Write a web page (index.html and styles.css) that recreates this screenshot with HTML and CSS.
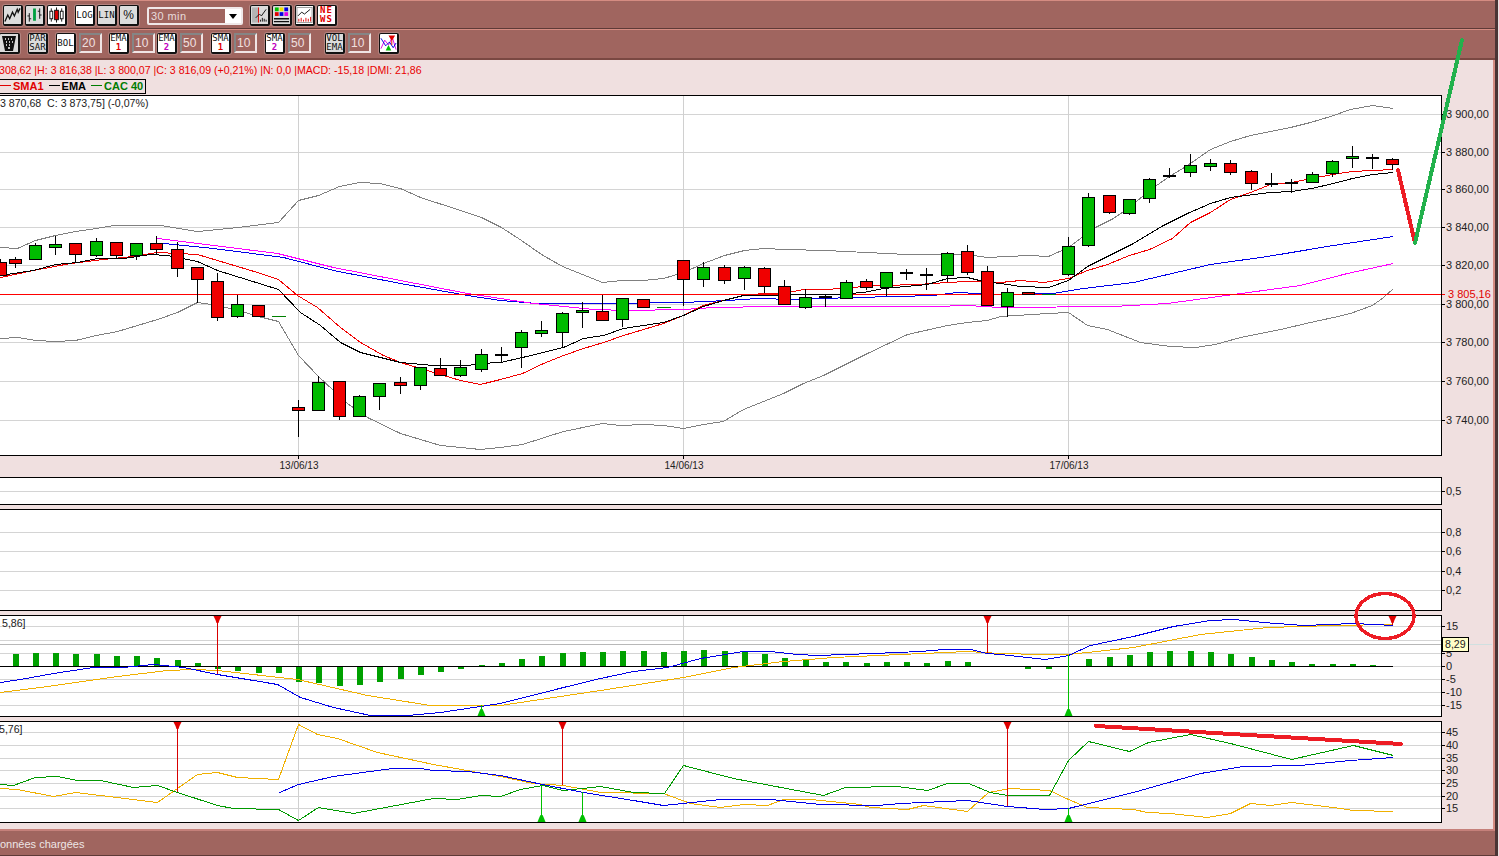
FILE: index.html
```html
<!DOCTYPE html>
<html lang="fr">
  <head>
    <meta charset="UTF-8" />
    <meta name="viewport" content="width=device-width, initial-scale=1.0" />
    <title>Graphique CAC 40</title>
    <link rel="stylesheet" href="styles.css">
  </head>
  <body>
    <div class="window">
      <div class="toolbar toolbar-top">
        <button class="tool">
          <svg viewBox="0 0 18 18"><path class="ic-line" d="M1 16 L4 9 L6 13 L9 6 L11 10 L14 3 L15 6 L17 2"/></svg>
        </button>
        <button class="tool m2">
          <svg viewBox="0 0 18 18"><path class="ic-k" d="M3.5 7V16M1.5 10H3.5M3.5 13H5.5M14.5 2V13M12.5 5H14.5M14.5 9H16.5"/><path class="ic-g" d="M9 2V15"/></svg>
        </button>
        <button class="tool m2 on">
          <svg viewBox="0 0 18 18"><path class="ic-k" d="M3.5 2V16M14.5 2V16"/><rect class="ic-w" x="2" y="5" width="3" height="8"/><rect class="ic-w" x="13" y="5" width="3" height="8"/><path class="ic-k" d="M9 1V17"/><rect class="ic-r" x="7" y="4" width="4" height="10"/></svg>
        </button>
        <button class="tool m8 on txt">LOG</button>
        <button class="tool m2 txt">LIN</button>
        <button class="tool m2 txt big">%</button>
        <div class="select m8"><span class="select-text">30 min</span><span class="select-arrow"></span></div>
        <button class="tool m7">
          <svg viewBox="0 0 18 18"><rect class="ic-gray" x="1" y="1" width="7" height="16"/><path class="ic-red" d="M8 1V17"/><path class="ic-k" d="M5 12L9 8L11 10L16 3M10 16V14M12 16V12M14 16V13M16 16V14"/></svg>
        </button>
        <button class="tool m2">
          <svg viewBox="0 0 18 18"><rect x="2" y="1" width="4" height="4" fill="#00c000"/><rect x="7" y="1" width="4" height="4" fill="#f0e000"/><rect x="12" y="1" width="4" height="4" fill="#0000e0"/><rect x="2" y="6" width="4" height="4" fill="#e00000"/><rect x="7" y="6" width="4" height="4" fill="#0000e0"/><rect x="12" y="6" width="4" height="4" fill="#e000e0"/><path class="ic-k2" d="M1 13H17M1 16H17"/></svg>
        </button>
        <button class="tool m3 on">
          <svg viewBox="0 0 18 18"><rect class="ic-frame" x="1" y="1" width="16" height="16"/><path class="ic-k" d="M2 10L6 6L9 8L15 3"/><path class="ic-red" d="M3 16V13M5.5 16V12M8 16V14M10.5 16V12M13 16V13M15.5 16V11"/></svg>
        </button>
        <button class="tool m2 on news">NE<br>WS</button>
      </div>

      <div class="toolbar toolbar-bottom">
        <button class="tool trash">
          <svg viewBox="0 0 18 18"><path d="M2 2H16L13 17H5Z" fill="#111"/><path class="ic-dots" d="M5 5H6M8 5H9M11 5H12M6 8H7M9 8H10M12 8H13M6 11H7M9 11H10M8 14H10"/></svg>
        </button>
        <button class="tool m8 txt two">PAR<br>SAR</button>
        <button class="tool m8 on txt">BOL</button>
        <div class="field m3">20</div>
        <button class="tool m7 on txt two">EMA<br><b class="one">1</b></button>
        <div class="field m3">10</div>
        <button class="tool m2 on txt two">EMA<br><b class="two-c">2</b></button>
        <div class="field m3">50</div>
        <button class="tool m8 on txt two">SMA<br><b class="one">1</b></button>
        <div class="field m3">10</div>
        <button class="tool m8 on txt two">SMA<br><b class="two-c">2</b></button>
        <div class="field m3">50</div>
        <button class="tool m14 txt two">VOL<br>EMA</button>
        <div class="field m3">10</div>
        <button class="tool m8 on">
          <svg viewBox="0 0 18 18"><path d="M1 15L5 6L9 11L13 3L17 16" fill="none" stroke="#e000e0"/><path d="M1 4L6 12L10 8L14 14L17 9" fill="none" stroke="#0000e0"/><path d="M9 1H16L13 6V11H12V6Z" fill="#e00000"/><path d="M6 17L9 11L12 17Z" fill="#00c000"/></svg>
        </button>
      </div>

      <main class="content">
        <div class="info">308,62 |H: 3 816,38 |L: 3 800,07 |C: 3 816,09 (+0,21%) |N: 0,0 |MACD: -15,18 |DMI: 21,86</div>
        <div class="legend">
          <span class="leg-red"><i></i>SMA1</span>
          <span class="leg-black"><i></i>EMA</span>
          <span class="leg-green"><i></i>CAC 40</span>
        </div>
        <div class="panels">
          <svg id="priceChart" class="chart chart-price" viewBox="0 95 1493 378"></svg>
          <svg id="emptyChart" class="chart chart-thin" viewBox="0 477 1493 28"></svg>
          <svg id="volChart" class="chart chart-mid" viewBox="0 509 1493 102"></svg>
          <svg id="macdChart" class="chart chart-mid" viewBox="0 615 1493 102"></svg>
          <svg id="dmiChart" class="chart chart-mid" viewBox="0 721 1493 102"></svg>
        </div>
      </main>

      <footer class="status">onnées chargées</footer>
    </div>

    <svg class="drawing" viewBox="0 0 1499 856">
      <path class="pen-red" d="M1398 170L1415 243"/>
      <path class="pen-green" d="M1415 243L1462 40"/>
      <ellipse class="pen-ring" cx="1385" cy="616" rx="29" ry="22.5"/>
      <path class="pen-red" d="M1096 726L1401 744"/>
    </svg>

    <script src="chart.js"></script>
  </body>
</html>
```

FILE: styles.css
```css
html,
body {
  margin: 0;
  padding: 0;
  background-color: #e8e0e0;
  overflow: hidden;
}

.window {
  display: flex;
  flex-direction: column;
  box-sizing: border-box;
  width: 1498px;
  height: 856px;
  background-color: #a0655f;
  border-right: 3px solid #4a3434;
  font-family: "Liberation Sans", Arial, sans-serif;
}

.toolbar {
  display: flex;
  align-items: flex-start;
  box-sizing: border-box;
}

.toolbar-top {
  height: 29px;
  padding: 4px 0 0 3px;
  border-top: 1px solid #d58c82;
  border-bottom: 1px solid #5e3a37;
}

.toolbar-bottom {
  height: 31px;
  padding: 3px 0 0 0;
  border-top: 1px solid #d58c82;
  border-bottom: 2px solid #7a4842;
}

.tool {
  flex: none;
  box-sizing: border-box;
  width: 20px;
  height: 21px;
  margin: 0;
  padding: 0;
  background-color: #dcdcdc;
  border: 1px solid #111;
  border-right-width: 2px;
  border-bottom-width: 2px;
  border-radius: 2px;
  box-shadow: 0 0 0 1px rgba(255, 255, 255, 0.2);
  cursor: pointer;
  overflow: hidden;
}

.tool.on {
  background-color: #fff;
}

.tool svg {
  display: block;
  width: 100%;
  height: 100%;
}

.tool.trash {
  width: 21px;
  margin-left: -1px;
}

.txt {
  font-family: "DejaVu Sans Mono", monospace;
  font-size: 9px;
  line-height: 9px;
  color: #111;
}

.txt.big {
  font-family: "Liberation Sans", sans-serif;
  font-size: 12px;
}

.txt b {
  font-weight: bold;
}

.txt .one {
  color: #e00000;
}

.txt .two-c {
  color: #c000c0;
}

.news {
  font-family: "DejaVu Sans Mono", monospace;
  font-size: 9px;
  font-weight: bold;
  line-height: 9px;
  letter-spacing: 1px;
  color: #e00000;
}

.m2 { margin-left: 2px; }
.m3 { margin-left: 3px; }
.m7 { margin-left: 7px; }
.m8 { margin-left: 8px; }
.m14 { margin-left: 14px; }

.select {
  display: flex;
  box-sizing: border-box;
  width: 96px;
  height: 18px;
  margin-top: 2px;
  border: 2px solid #f0e8e8;
  border-radius: 2px;
}

.select-text {
  flex: 1;
  padding-left: 2px;
  font-size: 11px;
  line-height: 14px;
  letter-spacing: 0.4px;
  color: #e8dcdc;
}

.select-arrow {
  position: relative;
  width: 16px;
  background-color: #fff;
}

.select-arrow::after {
  content: "";
  position: absolute;
  left: 4px;
  top: 5px;
  border-left: 4px solid transparent;
  border-right: 4px solid transparent;
  border-top: 5px solid #000;
}

.field {
  flex: none;
  box-sizing: border-box;
  width: 23px;
  height: 20px;
  padding-left: 1px;
  background-color: #a0655f;
  border: 2px solid;
  border-color: #858585 #f0e4e4 #f0e4e4 #858585;
  font-size: 12px;
  line-height: 16px;
  color: #f0e0e0;
}

.content {
  flex: 1;
  box-sizing: border-box;
  min-height: 0;
  background-color: #f0e0e0;
  border-right: 2px solid #d58c82;
  border-bottom: 2px solid #c5807a;
}

.info {
  height: 18px;
  padding-top: 3px;
  box-sizing: border-box;
  margin-left: -1px;
  font-size: 10.6px;
  line-height: 14px;
  white-space: nowrap;
  color: #e80000;
}

.legend {
  display: flex;
  gap: 5px;
  box-sizing: border-box;
  width: 147px;
  height: 15px;
  margin: 1px 0 0 -1px;
  border: 1px solid #000;
  font-size: 11px;
  font-weight: bold;
  line-height: 13px;
  white-space: nowrap;
}

.legend i {
  display: inline-block;
  width: 11px;
  height: 1px;
  margin-right: 2px;
  vertical-align: 4px;
  background-color: currentColor;
}

.leg-red { color: #e00000; }
.leg-black { color: #000; }
.leg-green { color: #007c00; }

.panels {
  display: flex;
  flex-direction: column;
  gap: 4px;
  margin-top: 1px;
}

.chart {
  display: block;
  width: 1493px;
  background: transparent;
}

.chart-price { height: 378px; }
.chart-thin { height: 28px; }
.chart-mid { height: 102px; }

.status {
  flex: none;
  box-sizing: border-box;
  height: 25px;
  padding-top: 7px;
  border-bottom: 1px solid #5e3a37;
  font-size: 11px;
  line-height: 13px;
  color: #eee6e6;
}

.drawing {
  position: absolute;
  left: 0;
  top: 0;
  width: 1499px;
  height: 856px;
  pointer-events: none;
}

.pen-red,
.pen-green,
.pen-ring {
  fill: none;
  stroke-width: 4;
  stroke-linecap: round;
  shape-rendering: crispEdges;
}

.pen-red { stroke: #ed1c24; }
.pen-green { stroke: #22b14c; }
.pen-ring { stroke: #ed1c24; stroke-width: 3.5; }

/* icon strokes */
.ic-k { fill: none; stroke: #111; stroke-width: 1; }
.ic-line { fill: none; stroke: #111; stroke-width: 1.4; }
.ic-k2 { fill: none; stroke: #111; stroke-width: 1.5; }
.ic-g { fill: none; stroke: #00a040; stroke-width: 3; }
.ic-w { fill: #fff; stroke: #111; stroke-width: 1; }
.ic-r { fill: #e00000; stroke: #111; stroke-width: 1; }
.ic-red { fill: none; stroke: #e00000; stroke-width: 1; }
.ic-gray { fill: #b4b4b4; }
.ic-frame { fill: none; stroke: #999; stroke-width: 1; }
.ic-dots { fill: none; stroke: #fff; stroke-width: 1.5; }

/* chart pieces */
.box { fill: #fff; }
.frame { fill: none; stroke: #000; shape-rendering: crispEdges; }
.grid { stroke: #d4d4d4; shape-rendering: crispEdges; }
.vgrid { stroke: #d0d0d0; shape-rendering: crispEdges; }
.tick { stroke: #000; shape-rendering: crispEdges; }
.ln { fill: none; stroke-width: 1; shape-rendering: crispEdges; }
.wick { stroke: #000; shape-rendering: crispEdges; }
.flat { fill: #008000; shape-rendering: crispEdges; }
.body { stroke: #000; shape-rendering: crispEdges; }
.up { fill: #00bb00; }
.down { fill: #f00000; }
.bar { fill: #00a000; shape-rendering: crispEdges; }
.zero { stroke: #000; shape-rendering: crispEdges; }
.level { fill: #ff0000; shape-rendering: crispEdges; }
.cross { stroke: #b8b8b8; shape-rendering: crispEdges; }
.cross-out { stroke: #d0e0e0; shape-rendering: crispEdges; }
.tip { fill: #ffffc8; stroke: #000; shape-rendering: crispEdges; }
.sig-red { stroke: #d80000; shape-rendering: crispEdges; }
.sig-green { stroke: #00c000; shape-rendering: crispEdges; }
.tri-red { fill: #e00000; }
.tri-green { fill: #00c000; }

.label,
.note {
  font-family: "Liberation Sans", Arial, sans-serif;
  font-size: 11px;
  fill: #222;
}

.note {
  font-size: 10.6px;
}

.label-red {
  fill: #e00000;
}

.date {
  text-anchor: middle;
  font-size: 10px;
}
```

FILE: chart.js
```js
const GRAY = "#808080";
const RED = "#f00000";
const BLACK = "#000000";
const BLUE = "#0000e8";
const MAGENTA = "#ff00ff";
const GREEN = "#009a00";
const ORANGE = "#f0b000";

// x, wick top, wick bottom, body top, body bottom, kind
const candles = [
  [0, 259, 275, 262, 275, "d"], [15, 257, 268, 259, 263, "d"], [35, 243, 259, 245, 259, "u"],
  [55, 236, 255, 244, 247, "u"], [75, 243, 263, 243, 254, "d"], [96, 238, 257, 241, 255, "u"],
  [116, 242, 258, 242, 255, "d"], [136, 243, 260, 243, 255, "u"], [156, 236, 255, 243, 249, "d"],
  [177, 242, 277, 249, 268, "d"], [197, 267, 303, 267, 279, "d"], [217, 273, 321, 281, 317, "d"],
  [237, 295, 318, 304, 316, "u"], [258, 305, 316, 305, 316, "d"], [278, 316, 316, 0, 0, "f"],
  [298, 400, 437, 407, 410, "d"], [318, 376, 411, 382, 410, "u"], [339, 381, 420, 381, 416, "d"],
  [359, 395, 416, 396, 416, "u"], [379, 383, 410, 383, 396, "u"], [400, 377, 394, 382, 385, "d"],
  [420, 367, 390, 367, 385, "u"], [440, 358, 376, 368, 375, "d"], [460, 360, 377, 367, 375, "u"],
  [481, 349, 372, 354, 369, "u"], [501, 347, 363, 355, 0, "x"], [521, 330, 368, 332, 347, "u"],
  [541, 321, 337, 330, 333, "u"], [562, 312, 347, 313, 332, "u"], [582, 302, 328, 310, 312, "u"],
  [602, 295, 320, 311, 320, "d"], [622, 298, 327, 298, 319, "u"], [643, 299, 307, 299, 307, "d"],
  [663, 307, 307, 0, 0, "f"], [683, 260, 306, 260, 279, "d"], [703, 262, 287, 267, 279, "u"],
  [724, 265, 284, 267, 280, "d"], [744, 266, 290, 267, 278, "u"], [764, 267, 293, 268, 286, "d"],
  [784, 280, 304, 286, 304, "d"], [805, 289, 309, 297, 307, "u"], [825, 294, 307, 297, 0, "x"],
  [846, 280, 298, 282, 298, "u"], [866, 279, 290, 281, 287, "d"], [886, 272, 296, 272, 287, "u"],
  [906, 269, 280, 273, 0, "x"], [926, 268, 290, 275, 0, "x"], [947, 252, 282, 253, 275, "u"],
  [967, 245, 275, 251, 272, "d"], [987, 266, 305, 271, 305, "d"], [1007, 288, 317, 292, 306, "u"],
  [1028, 292, 294, 292, 294, "d"], [1048, 294, 294, 0, 0, "f"], [1068, 237, 276, 246, 274, "u"],
  [1088, 193, 247, 197, 245, "u"], [1109, 195, 214, 195, 212, "d"], [1129, 199, 215, 199, 213, "u"],
  [1149, 178, 203, 179, 198, "u"], [1169, 168, 178, 176, 0, "x"], [1190, 154, 177, 165, 172, "u"],
  [1210, 159, 171, 163, 166, "u"], [1230, 160, 175, 163, 172, "d"], [1251, 170, 190, 171, 183, "d"],
  [1271, 173, 187, 184, 0, "x"], [1291, 179, 193, 183, 0, "x"], [1312, 172, 182, 174, 182, "u"],
  [1332, 160, 177, 161, 173, "u"], [1352, 146, 168, 156, 158, "u"], [1372, 154, 169, 158, 0, "x"],
  [1392, 158, 170, 159, 164, "d"],
];

const bandUp = [0,247,17,248,35,240,55,235,75,231,96,228,113,225,160,225,197,231,238,227,278,222,298,200,318,195,339,186,359,182,379,183,400,188,420,197,460,210,481,217,501,227,521,240,541,254,562,266,582,274,602,282,622,280,643,280,663,278,683,272,703,263,724,255,744,250,764,248,785,249,825,250,866,252,906,254,966,254,987,257,1007,256,1028,255,1048,256,1068,247,1095,227,1113,218,1129,207,1149,190,1169,176,1187,165,1210,149,1230,141,1250,135,1270,131,1290,127,1310,122,1330,116,1350,109,1372,105,1393,108];
const bandLow = [0,338,17,337,35,340,55,341,75,340,96,335,117,331,137,325,157,319,177,312,197,302,217,305,238,310,258,316,278,321,298,355,318,376,333,390,347,403,367,417,400,433,440,445,480,449,500,447,522,444,563,431,602,423,620,425,643,424,663,425,683,428,703,424,723,421,743,409,763,401,783,393,803,383,823,375,867,353,907,334,947,325,967,322,987,320,1000,316,1048,313,1068,312,1087,325,1107,329,1140,342,1170,346,1195,347,1215,344,1240,337,1280,329,1310,322,1333,317,1350,313,1372,305,1383,297,1393,288];
const sma1 = [0,277,33,270,70,263,103,259,133,256,157,252,177,253,197,254,217,260,257,272,278,279,297,295,317,307,340,327,360,342,383,355,400,362,420,368,440,374,460,380,480,384,500,379,522,373,543,363,563,355,583,348,603,342,623,335,663,323,683,315,703,305,723,300,743,295,763,293,783,293,803,289,823,289,843,288,863,286,883,285,917,284,947,282,967,281,1000,282,1020,280,1043,282,1068,278,1087,270,1107,264,1129,255,1149,249,1172,238,1190,222,1210,212,1230,199,1250,192,1270,184,1291,182,1311,178,1332,174,1352,171,1372,170,1393,169];
const ema = [0,275,13,273,33,270,55,264,77,262,97,258,123,258,150,254,167,255,197,261,217,270,278,289,300,312,320,325,340,342,360,352,400,362,433,365,467,365,480,363,500,362,522,357,563,347,583,338,603,335,623,328,663,322,683,315,703,306,723,300,743,295,833,294,863,292,883,288,927,284,947,278,967,277,983,281,1000,283,1020,286,1048,287,1068,280,1087,266,1133,243,1163,225,1187,213,1210,203,1230,197,1270,192,1291,191,1311,188,1333,183,1352,178,1372,174,1393,172];
const emaBlue = [163,243,213,248,283,257,333,270,400,283,467,295,500,300,537,303,600,303,683,302,727,300,757,298,793,299,853,297,897,296,933,295,957,292,1000,294,1053,293,1083,288,1133,282,1210,264,1267,256,1333,245,1393,236];
const smaPink = [157,238,213,245,277,253,333,267,400,280,467,293,500,298,533,303,593,309,627,310,683,309,713,307,773,306,933,306,967,305,1000,307,1113,306,1167,303,1233,294,1300,285,1347,273,1393,263];

// x, height (negative goes under the zero line)
const macdBars = [
  [16,12],[36,13],[56,13],[76,12],[97,12],[117,10],[137,10],[157,8],[178,6],[198,3],[218,-3],[238,-5],
  [259,-7],[279,-7],[299,-16],[319,-17],[340,-20],[360,-19],[380,-16],[401,-13],[421,-9],[441,-6],[461,-3],
  [482,1],[502,3],[522,7],[542,10],[563,13],[583,14],[603,14],[623,15],[644,15],[664,14],[684,15],[704,16],
  [725,15],[745,14],[765,12],[785,8],[806,6],[826,4],[846,4],[867,3],[887,4],[907,4],[927,3],[948,5],[968,4],
  [1007,-1],[1028,-3],[1049,-3],[1089,7],[1110,9],[1130,11],[1150,14],[1170,15],[1191,15],[1211,14],[1231,12],
  [1252,9],[1272,6],[1292,4],[1312,2],[1333,2],[1353,2],[1373,1],
];
const macdBlue = [0,682,20,679,53,673,93,667,123,667,153,664,183,667,217,674,277,684,300,697,333,707,370,715,407,715,440,712,480,706,500,703,563,687,600,678,633,671,667,667,700,658,743,651,770,651,797,654,817,655,873,653,920,651,943,649,970,649,987,653,1000,654,1045,659,1068,655,1090,645,1133,636,1173,626,1210,620,1233,619,1263,622,1303,625,1353,623,1393,625];
const macdOrange = [0,692,40,687,117,676,167,670,193,669,217,670,297,679,367,695,430,705,480,705,500,705,600,690,683,677,733,667,783,661,833,657,900,654,967,651,1000,653,1040,654,1068,654,1133,647,1200,634,1267,627,1333,625,1393,624];
const dmiOrange = [0,788,17,789,53,796,75,792,100,795,157,802,197,774,217,772,237,777,278,779,298,724,317,734,337,738,377,752,433,764,500,776,533,783,563,785,600,792,663,793,690,803,720,807,743,804,767,805,783,799,810,799,860,804,870,807,907,809,923,805,967,811,988,792,1010,788,1049,790,1068,799,1087,807,1133,809,1147,812,1170,813,1207,817,1230,813,1250,803,1270,805,1291,802,1333,807,1353,810,1393,811];
const dmiGreen = [0,784,13,785,35,777,57,776,77,780,100,780,133,787,157,785,177,792,217,805,233,808,278,809,298,820,318,807,353,813,433,798,457,799,480,795,500,796,520,789,542,785,563,790,600,786,633,792,664,793,683,765,733,778,823,795,845,787,897,786,927,790,947,783,968,783,990,792,1007,795,1049,795,1068,760,1088,741,1129,751,1148,742,1190,734,1230,743,1291,759,1353,745,1393,755];
const dmiBlue = [279,792,298,784,333,776,377,770,393,768,420,768,433,770,467,771,500,775,542,784,583,792,633,800,663,805,720,799,770,799,820,804,877,805,900,803,967,800,1007,806,1045,809,1068,808,1133,792,1200,773,1243,766,1300,765,1350,760,1393,757];

// points sit on pixel centres so flat runs stay one clean row
function polyline(points, color) {
  const shifted = points.map((p) => p + 0.5);
  return `<polyline class="ln" stroke="${color}" points="${shifted.join(" ")}"/>`;
}

// white panel background plus grid lines and their tick marks
function panelBase(top, bottom, rows, verticals) {
  let out = `<rect class="box" x="-2" y="${top}" width="1443" height="${bottom - top}"/>`;
  rows.forEach((row) => {
    out += `<line class="grid" x1="0" x2="1441" y1="${row[0] + 0.5}" y2="${row[0] + 0.5}"/>`;
    out += `<line class="tick" x1="1441" x2="1445" y1="${row[0] + 0.5}" y2="${row[0] + 0.5}"/>`;
    out += `<text class="label" x="1446" y="${row[0] + 4}">${row[1]}</text>`;
  });
  verticals.forEach((x) => {
    out += `<line class="vgrid" x1="${x + 0.5}" x2="${x + 0.5}" y1="${top}" y2="${bottom}"/>`;
  });
  return out;
}

function panelFrame(top, bottom) {
  return `<rect class="frame" x="-2" y="${top + 0.5}" width="1443.5" height="${bottom - top}"/>`;
}

function candle(c) {
  const x = c[0] + 0.5;
  const kind = c[5];
  if (kind === "f") {
    return `<rect class="flat" x="${x - 7}" y="${c[1]}" width="14" height="1"/>`;
  }
  let out = `<line class="wick" x1="${x}" x2="${x}" y1="${c[1]}" y2="${c[2]}"/>`;
  if (kind === "x") {
    out += `<rect x="${x - 6.5}" y="${c[3] - 1}" width="13" height="2" fill="#000"/>`;
  } else {
    const fill = kind === "u" ? "up" : "down";
    out += `<rect class="body ${fill}" x="${x - 6}" y="${c[3] + 0.5}" width="12" height="${c[4] - c[3]}"/>`;
  }
  return out;
}

function signal(x, from, to, isRed, top, bottom) {
  const px = x + 0.5;
  if (isRed) {
    return (
      `<line class="sig-red" x1="${px}" x2="${px}" y1="${from}" y2="${to}"/>` +
      `<polygon class="tri-red" points="${px - 4},${top + 1} ${px + 4},${top + 1} ${px + 2},${top + 5} ${px + 1},${top + 8} ${px - 1},${top + 8} ${px - 2},${top + 5}"/>`
    );
  }
  return (
    `<line class="sig-green" x1="${px}" x2="${px}" y1="${from}" y2="${to}"/>` +
    `<polygon class="tri-green" points="${px - 4},${bottom} ${px + 4},${bottom} ${px + 2},${bottom - 5} ${px + 1},${bottom - 7} ${px - 1},${bottom - 7} ${px - 2},${bottom - 5}"/>`
  );
}

function drawPrice() {
  const rows = [
    [114, "3 900,00"], [152, "3 880,00"], [189, "3 860,00"], [227, "3 840,00"], [265, "3 820,00"],
    [304, "3 800,00"], [342, "3 780,00"], [381, "3 760,00"], [420, "3 740,00"],
  ];
  const dates = [[298, "13/06/13"], [683, "14/06/13"], [1068, "17/06/13"]];
  let out = panelBase(95, 455, rows, dates.map((d) => d[0]));
  out += polyline(bandUp, GRAY) + polyline(bandLow, GRAY);
  out += polyline(emaBlue, BLUE) + polyline(smaPink, MAGENTA);
  out += `<rect class="level" x="0" y="294" width="1445" height="1"/>`;
  out += polyline(sma1, RED) + polyline(ema, BLACK);
  candles.forEach((c) => {
    out += candle(c);
  });
  out += panelFrame(95, 455);
  out += `<text class="label label-red" x="1448" y="298">3 805,16</text>`;
  out += `<text class="note" x="0" y="107" xml:space="preserve">3 870,68  C: 3 873,75] (-0,07%)</text>`;
  dates.forEach((d) => {
    out += `<line class="tick" x1="${d[0] + 0.5}" x2="${d[0] + 0.5}" y1="455" y2="459"/>`;
    out += `<text class="label date" x="${d[0] + 1}" y="469">${d[1]}</text>`;
  });
  document.getElementById("priceChart").innerHTML = out;
}

function drawEmpty() {
  const out = panelBase(477, 504, [[491, "0,5"]], []) + panelFrame(477, 504);
  document.getElementById("emptyChart").innerHTML = out;
}

function drawVol() {
  const rows = [[532, "0,8"], [551, "0,6"], [571, "0,4"], [590, "0,2"]];
  const out = panelBase(509, 610, rows, []) + panelFrame(509, 610);
  document.getElementById("volChart").innerHTML = out;
}

function drawMacd() {
  const rows = [
    [626, "15"], [653, "5"], [666, "0"], [679, "-5"], [692, "-10"], [705, "-15"],
  ];
  let out = panelBase(615, 716, rows, [298, 683, 1068]);
  out += `<line class="grid" x1="0" x2="1441" y1="640.5" y2="640.5"/>`;
  out += `<line class="cross" x1="0" x2="1441" y1="644.5" y2="644.5"/>`;
  macdBars.forEach((b) => {
    const y = b[1] > 0 ? 666 - b[1] : 666;
    out += `<rect class="bar" x="${b[0] - 3}" y="${y}" width="6" height="${Math.abs(b[1])}"/>`;
  });
  out += `<line class="zero" x1="0" x2="1393" y1="666.5" y2="666.5"/>`;
  out += polyline(macdOrange, ORANGE) + polyline(macdBlue, BLUE);
  out += signal(217, 615, 674, true, 615, 716);
  out += signal(987, 615, 653, true, 615, 716);
  out += signal(1392, 615, 625, true, 615, 716);
  out += signal(1068, 655, 716, false, 615, 716);
  out += signal(481, 705, 716, false, 615, 716);
  out += panelFrame(615, 716);
  out += `<line class="cross-out" x1="1469" x2="1492" y1="644.5" y2="644.5"/>`;
  out += `<rect class="tip" x="1442.5" y="637.5" width="26" height="14"/>`;
  out += `<text class="note" x="1445" y="648">8,29</text>`;
  out += `<text class="note" x="2" y="627">5,86]</text>`;
  document.getElementById("macdChart").innerHTML = out;
}

function drawDmi() {
  const rows = [
    [732, "45"], [745, "40"], [758, "35"], [770, "30"], [783, "25"], [796, "20"], [808, "15"],
  ];
  let out = panelBase(721, 822, rows, [298, 683, 1068]);
  out += polyline(dmiOrange, ORANGE) + polyline(dmiGreen, GREEN) + polyline(dmiBlue, BLUE);
  out += signal(177, 721, 792, true, 721, 822);
  out += signal(562, 721, 785, true, 721, 822);
  out += signal(1007, 721, 806, true, 721, 822);
  out += signal(541, 785, 822, false, 721, 822);
  out += signal(582, 792, 822, false, 721, 822);
  out += signal(1068, 808, 822, false, 721, 822);
  out += panelFrame(721, 822);
  out += `<text class="note" x="-1" y="733">5,76]</text>`;
  document.getElementById("dmiChart").innerHTML = out;
}

document.addEventListener("DOMContentLoaded", function () {
  drawPrice();
  drawEmpty();
  drawVol();
  drawMacd();
  drawDmi();
});
```
